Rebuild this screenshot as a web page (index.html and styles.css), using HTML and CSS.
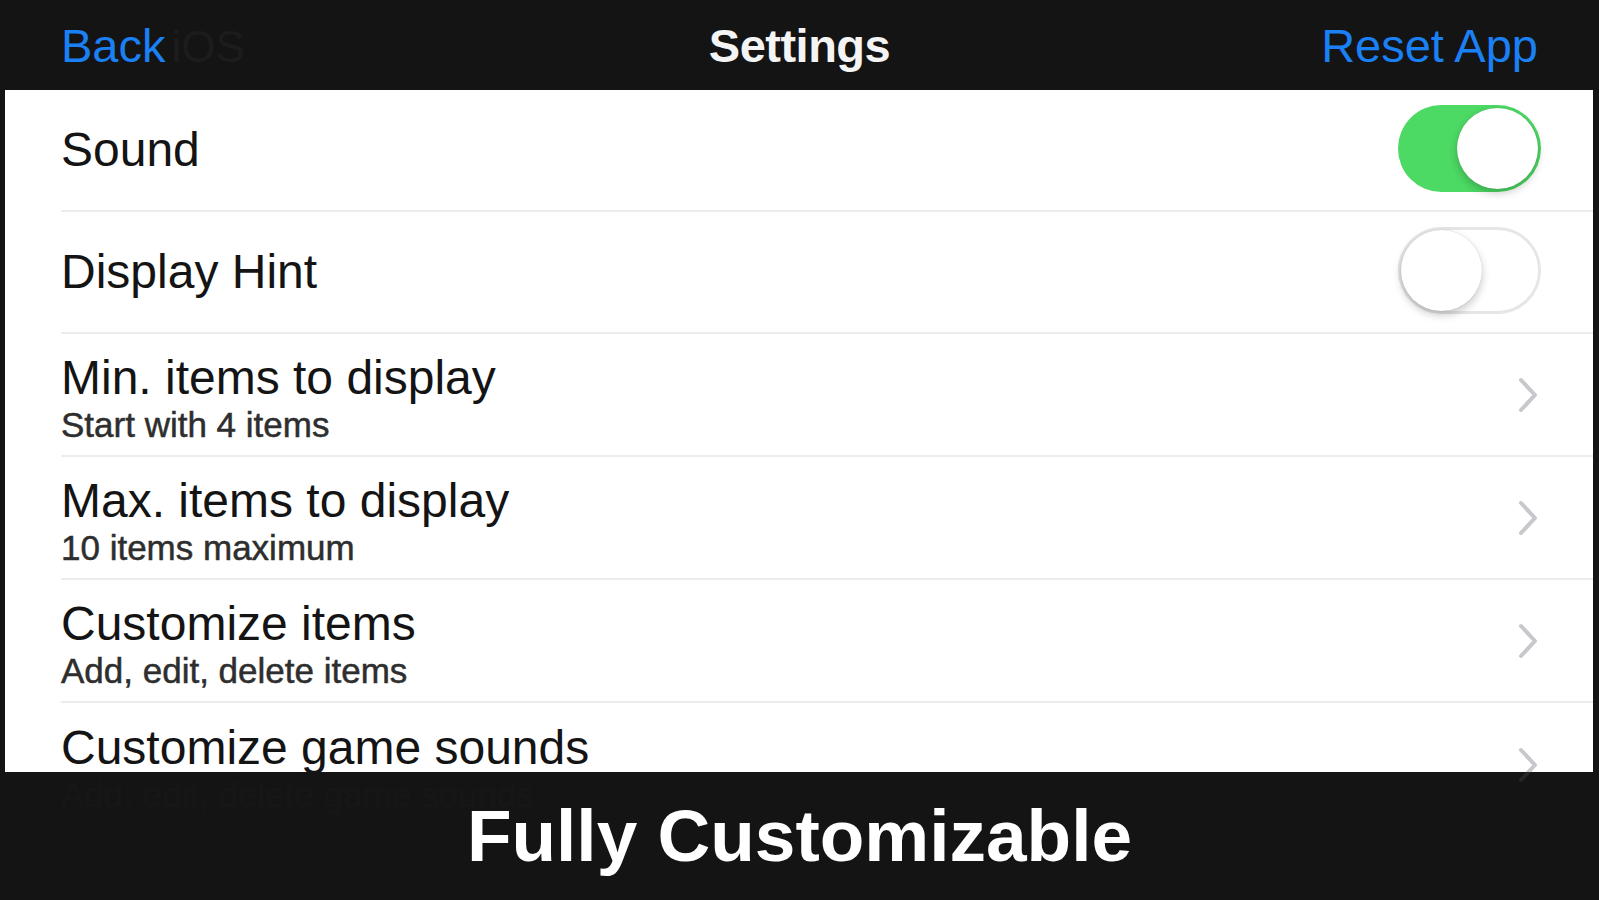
FILE: index.html
```html
<!DOCTYPE html>
<html>
<head>
<meta charset="utf-8">
<link rel="stylesheet" href="styles.css">
</head>
<body>
<div class="screen">
  <header class="navbar">
    <div class="nav-left"><span class="nav-link">Back</span><span class="ghost">iOS</span></div>
    <div class="nav-title">Settings</div>
    <div class="nav-right"><span class="nav-link">Reset App</span></div>
  </header>
  <main class="list">
    <div class="row row-first">
      <div class="label"><div class="title">Sound</div></div>
      <div class="switch on"><div class="knob"></div></div>
    </div>
    <div class="row row-second">
      <div class="label"><div class="title">Display Hint</div></div>
      <div class="switch off"><div class="knob"></div></div>
    </div>
    <div class="row">
      <div class="label"><div class="title">Min. items to display</div><div class="sub">Start with 4 items</div></div>
      <svg class="chev" viewBox="0 0 20 36" width="20" height="36"><path d="M3 3 L17 18 L3 33" fill="none" stroke="#c7c7cc" stroke-width="4" stroke-linecap="round" stroke-linejoin="round"/></svg>
    </div>
    <div class="row">
      <div class="label"><div class="title">Max. items to display</div><div class="sub">10 items maximum</div></div>
      <svg class="chev" viewBox="0 0 20 36" width="20" height="36"><path d="M3 3 L17 18 L3 33" fill="none" stroke="#c7c7cc" stroke-width="4" stroke-linecap="round" stroke-linejoin="round"/></svg>
    </div>
    <div class="row">
      <div class="label"><div class="title">Customize items</div><div class="sub">Add, edit, delete items</div></div>
      <svg class="chev" viewBox="0 0 20 36" width="20" height="36"><path d="M3 3 L17 18 L3 33" fill="none" stroke="#c7c7cc" stroke-width="4" stroke-linecap="round" stroke-linejoin="round"/></svg>
    </div>
    <div class="row row-last">
      <div class="label"><div class="title">Customize game sounds</div><div class="sub">Add, edit, delete game sounds</div></div>
      <svg class="chev" viewBox="0 0 20 36" width="20" height="36"><path d="M3 3 L17 18 L3 33" fill="none" stroke="#c7c7cc" stroke-width="4" stroke-linecap="round" stroke-linejoin="round"/></svg>
    </div>
  </main>
  <footer class="caption">Fully Customizable</footer>
</div>
</body>
</html>
```
FILE: styles.css
```css
* { box-sizing: border-box; }
html, body {
  margin: 0;
  padding: 0;
  background: #141414;
}
body {
  font-family: "Liberation Sans", Arial, sans-serif;
  width: 1599px;
  height: 900px;
  overflow: hidden;
}
.screen {
  width: 1599px;
  height: 900px;
  display: flex;
  flex-direction: column;
}
.navbar {
  height: 90px;
  flex: none;
  display: grid;
  grid-template-columns: 1fr auto 1fr;
  align-items: center;
  padding: 0 61px;
  background: #141414;
}
.nav-left { display: flex; align-items: baseline; }
.nav-right { display: flex; justify-content: flex-end; }
.nav-link {
  color: #1a80f4;
  font-size: 47px;
}
.ghost {
  color: #1c1c1c;
  font-size: 44px;
  margin-left: 6px;
}
.nav-title {
  color: #f4f4f4;
  font-size: 47px;
  font-weight: bold;
  letter-spacing: -0.5px;
}
.list {
  flex: none;
  height: 682px;
  margin: 0 6px 0 5px;
  background: #ffffff;
}
.row {
  height: 123px;
  margin-left: 56px;
  padding-right: 52px;
  display: flex;
  align-items: center;
  justify-content: space-between;
  border-bottom: 2px solid #ececec;
}
.row-first { height: 122px; }
.row-second { height: 122px; }
.row-last { border-bottom: none; }
.label { display: flex; flex-direction: column; padding-top: 13px; }
.row-first .label, .row-second .label { padding-top: 0; }
.title {
  color: #141414;
  font-size: 48px;
  line-height: 48px;
}
.sub {
  color: #2e2e2e;
  font-size: 35px;
  line-height: 46px;
  -webkit-text-stroke: 0.5px #2e2e2e;
}
.chev { margin-right: 3px; }
.switch {
  width: 143px;
  height: 87px;
  border-radius: 44px;
  position: relative;
  flex: none;
  margin-top: -4px;
}
.switch.on { background: #4cd964; }
.switch.off {
  background: #ffffff;
  border: 3px solid #e6e6e6;
}
.knob {
  position: absolute;
  width: 81px;
  height: 81px;
  border-radius: 50%;
  background: #ffffff;
  top: 3px;
  box-shadow: 0 4px 8px rgba(0,0,0,0.22), 0 0 1px rgba(0,0,0,0.2);
}
.switch.on .knob { right: 3px; }
.switch.off .knob { left: 0; top: 0; }
.caption {
  flex: 1;
  position: relative;
  background: rgba(20,20,20,0.9);
  color: #ffffff;
  font-size: 73px;
  font-weight: bold;
  display: flex;
  justify-content: center;
  align-items: center;
  padding-bottom: 2px;
}
```
